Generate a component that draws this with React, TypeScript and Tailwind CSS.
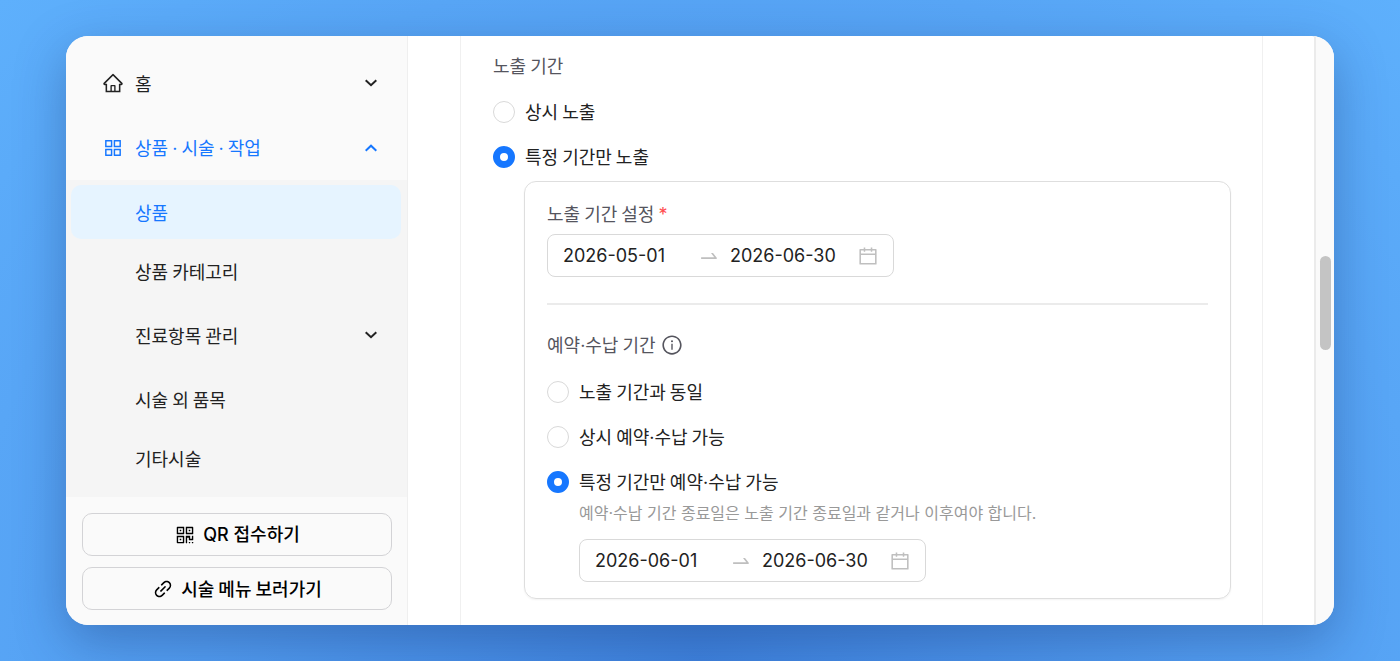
import { useState, type ReactNode } from "react"
import {
  AiOutlineAppstore,
  AiOutlineCalendar,
  AiOutlineHome,
  AiOutlineInfoCircle,
  AiOutlineLink,
  AiOutlineQrcode,
  AiOutlineSwapRight,
} from "react-icons/ai"

const Chevron = ({ up = false }: { up?: boolean }) => {
  return (
    <svg viewBox="0 0 16 16" fill="none" stroke="currentColor" strokeWidth="2" className="size-4" aria-hidden="true">
      <path d={up ? "M2.7 10.7 8 5.7l5.3 5" : "M2.7 5.2 8 10.2l5.3-5"} />
    </svg>
  )
}

// the CJK font's middle dot is too wide, use the latin one
const Dot = () => <span className="font-['Inter',sans-serif]">·</span>

const Sidebar = () => {
  return (
    <aside className="flex w-[342px] shrink-0 flex-col border-r border-[#efefef] bg-[#fafafa]">
      <nav className="flex flex-col">
        <button className="mt-5 flex h-[54px] items-center pr-7 pl-9 text-[#222]">
          <AiOutlineHome className="size-[22px]" />
          <span className="ml-[11px] flex-1 text-left">홈</span>
          <Chevron />
        </button>
        <button className="mt-[11px] mb-[5px] flex h-[54px] items-center pr-7 pl-9 text-[#1677ff]">
          <AiOutlineAppstore className="size-[22px]" />
          <span className="ml-[11px] flex-1 text-left">
            상품 <Dot /> 시술 <Dot /> 작업
          </span>
          <Chevron up />
        </button>
        <div className="flex flex-col gap-[5px] bg-[#f5f5f5] pt-[5px] pr-[6px] pb-3 pl-[5px] text-[#222]">
          <a href="#products" className="flex h-[54px] items-center rounded-[10px] bg-[#e6f4ff] pl-16 text-[#1677ff]">
            상품
          </a>
          <a href="#categories" className="flex h-[54px] items-center pl-16">
            상품 카테고리
          </a>
          <button className="my-[5px] flex h-[54px] items-center pr-[22px] pl-16">
            <span className="flex-1 text-left">진료항목 관리</span>
            <Chevron />
          </button>
          <a href="#items" className="flex h-[54px] items-center pl-16">
            시술 외 품목
          </a>
          <a href="#etc" className="flex h-[54px] items-center pl-16">
            기타시술
          </a>
        </div>
      </nav>
      <div className="flex flex-col gap-[11px] pt-4 pr-[15px] pb-[15px] pl-4 font-medium text-black">
        <button className="flex h-[43px] items-center justify-center gap-[7px] rounded-[10px] border border-[#d3d3d6] font-['Inter','Noto_Sans_CJK_KR',sans-serif]">
          <AiOutlineQrcode className="size-[22px]" />
          QR 접수하기
        </button>
        <button className="flex h-[43px] items-center justify-center gap-[7px] rounded-[10px] border border-[#d3d3d6]">
          <AiOutlineLink className="size-[22px]" />
          시술 메뉴 보러가기
        </button>
      </div>
    </aside>
  )
}

type RadioProps = {
  name: string
  checked: boolean
  onChange: () => void
  children: ReactNode
}

const Radio = ({ name, checked, onChange, children }: RadioProps) => {
  return (
    <label className="flex h-[27px] items-center gap-[10px] text-[#222]">
      <input
        type="radio"
        name={name}
        checked={checked}
        onChange={onChange}
        className="size-[22px] shrink-0 appearance-none rounded-full border border-[#d9d9d9] bg-white checked:border-[7px] checked:border-[#1677ff]"
      />
      <span>{children}</span>
    </label>
  )
}

type DateRangeProps = {
  label: string
  start: string
  end: string
}

const DateRange = ({ label, start, end }: DateRangeProps) => {
  return (
    <div className="flex h-[43px] w-[347px] items-center rounded-lg border border-[#d9d9d9] bg-white pr-[14px] pl-[15px] font-['Inter',sans-serif]">
      <input aria-label={`${label} 시작일`} defaultValue={start} className="w-[125px] min-w-0 text-[#222] outline-none" />
      <AiOutlineSwapRight className="mx-[10px] size-[22px] shrink-0 text-[#bfbfbf]" />
      <input aria-label={`${label} 종료일`} defaultValue={end} className="min-w-0 flex-1 text-[#222] outline-none" />
      <AiOutlineCalendar className="size-[22px] shrink-0 text-[#bfbfbf]" />
    </div>
  )
}

const ExposureForm = () => {
  const [exposure, setExposure] = useState("period")
  const [booking, setBooking] = useState("period")

  return (
    <section className="mr-[51px] ml-[52px] flex flex-1 flex-col border-x border-[#f0f0f0] pt-4 pr-[31px] pl-8">
      <h2 className="h-[27px] text-[#55555e]">노출 기간</h2>
      <div className="mt-[19px] flex flex-col gap-[18px]">
        <Radio name="exposure" checked={exposure === "always"} onChange={() => setExposure("always")}>
          상시 노출
        </Radio>
        <Radio name="exposure" checked={exposure === "period"} onChange={() => setExposure("period")}>
          특정 기간만 노출
        </Radio>
      </div>
      <div className="mt-[11px] ml-[31px] flex flex-col rounded-xl border border-[#dedede] px-[22px] pt-[18px] pb-4 shadow-xs">
        <h3 className="h-[27px] text-[#55555e]">
          노출 기간 설정 <span className="font-['Inter',sans-serif] text-[#ff4d4f]">*</span>
        </h3>
        <div className="mt-[7px]">
          <DateRange label="노출 기간" start="2026-05-01" end="2026-06-30" />
        </div>
        <hr className="my-[26px] border-t-2 border-[#ebebeb]" />
        <h3 className="flex h-[27px] items-center gap-[5px] text-[#55555e]">
          <span>
            예약
            <Dot />
            수납 기간
          </span>
          <AiOutlineInfoCircle className="size-[22px]" />
        </h3>
        <div className="mt-5 flex flex-col gap-[18px]">
          <Radio name="booking" checked={booking === "same"} onChange={() => setBooking("same")}>
            노출 기간과 동일
          </Radio>
          <Radio name="booking" checked={booking === "always"} onChange={() => setBooking("always")}>
            상시 예약
            <Dot />
            수납 가능
          </Radio>
          <Radio name="booking" checked={booking === "period"} onChange={() => setBooking("period")}>
            특정 기간만 예약
            <Dot />
            수납 가능
          </Radio>
        </div>
        <div className="mt-[5px] ml-8">
          <p className="font-['Inter','Noto_Sans_CJK_KR',sans-serif] text-base leading-[27px] text-[#999]">
            예약·수납 기간 종료일은 노출 기간 종료일과 같거나 이후여야 합니다.
          </p>
          <div className="mt-3">
            <DateRange label="예약·수납 기간" start="2026-06-01" end="2026-06-30" />
          </div>
        </div>
      </div>
    </section>
  )
}

const App = () => {
  return (
    <div className="min-h-screen bg-[radial-gradient(ellipse_at_50%_100%,#3f82dd_0%,#529cf0_50%,#5eb0fc_100%)] px-[66px] py-9 font-['Noto_Sans_CJK_KR','Inter',sans-serif] text-[18px] leading-[27px]">
      <main className="flex min-h-[calc(100vh-72px)] overflow-hidden rounded-[22px] bg-white shadow-[0_16px_50px_rgba(20,50,110,0.35)]">
        <Sidebar />
        <ExposureForm />
        <div className="w-5 shrink-0 border-l-2 border-[#ebebeb] bg-[#fafafa] pt-[220px]">
          <div className="mx-auto h-[94px] w-[11px] rounded-full bg-[#c4c4c4]" />
        </div>
      </main>
    </div>
  )
}

export default App
